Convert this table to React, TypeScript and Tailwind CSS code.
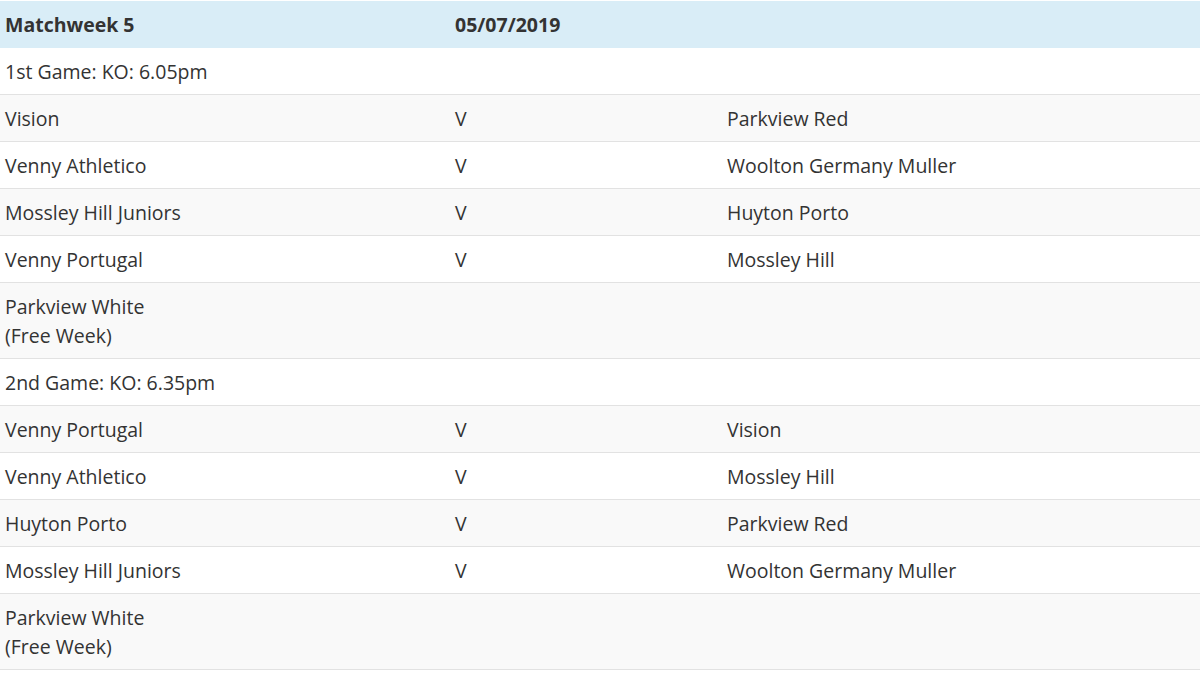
const rows: { cells: string[] }[] = [
  { cells: ["1st Game: KO: 6.05pm", "", ""] },
  { cells: ["Vision", "V", "Parkview Red"] },
  { cells: ["Venny Athletico", "V", "Woolton Germany Muller"] },
  { cells: ["Mossley Hill Juniors", "V", "Huyton Porto"] },
  { cells: ["Venny Portugal", "V", "Mossley Hill"] },
  { cells: ["Parkview White\n(Free Week)", "", ""] },
  { cells: ["2nd Game: KO: 6.35pm", "", ""] },
  { cells: ["Venny Portugal", "V", "Vision"] },
  { cells: ["Venny Athletico", "V", "Mossley Hill"] },
  { cells: ["Huyton Porto", "V", "Parkview Red"] },
  { cells: ["Mossley Hill Juniors", "V", "Woolton Germany Muller"] },
  { cells: ["Parkview White\n(Free Week)", "", ""] },
]

export default function App() {
  return (
    <div className="min-h-screen w-[1200px] bg-white pt-[1px] text-[#333] font-['Open_Sans',sans-serif] text-[19.5px] leading-[29px]">
      <div className="grid grid-cols-[450px_272px_1fr] bg-[#d9edf7] font-bold">
        <div className="pl-[5px] pt-[9px] pb-[9px]">Matchweek 5</div>
        <div className="pl-[5px] pt-[9px] pb-[9px]">05/07/2019</div>
        <div />
      </div>
      {rows.map((row, i) => (
        <div
          key={i}
          className={`grid grid-cols-[450px_272px_1fr] border-b border-[#e2e2e2] ${i % 2 === 1 ? "bg-[#f9f9f9]" : "bg-white"}`}
        >
          {row.cells.map((c, j) => (
            <div key={j} className="pl-[5px] pt-[9px] pb-[8px] whitespace-pre-line">
              {c}
            </div>
          ))}
        </div>
      ))}
    </div>
  )
}
